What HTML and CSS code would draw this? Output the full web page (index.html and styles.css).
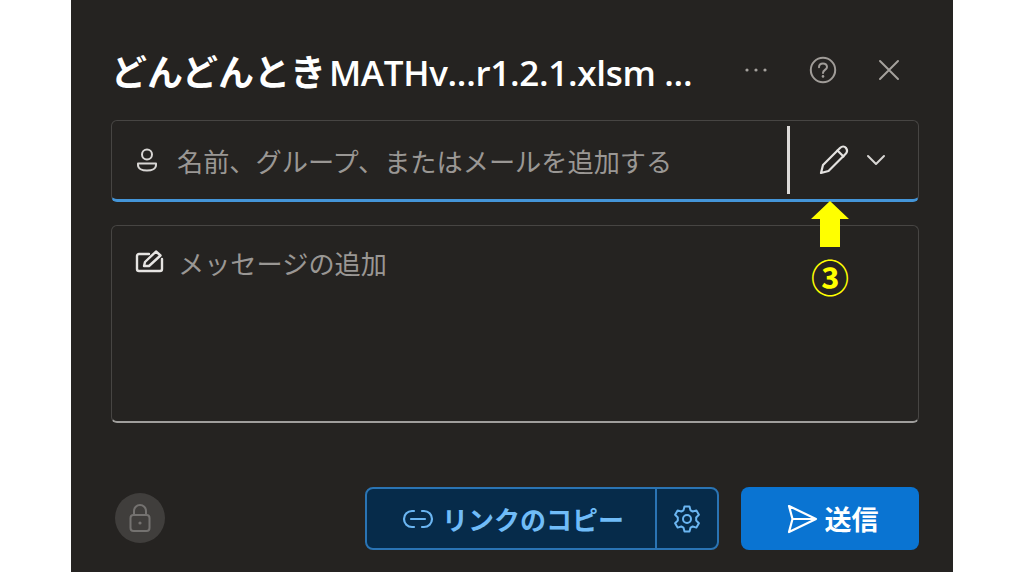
FILE: index.html
```html
<!DOCTYPE html>
<html lang="ja">
<head>
    <meta charset="UTF-8">
    <link rel="stylesheet" href="styles.css">
</head>
<body>
    <div class="panel">
        <header class="top">
            <h1 class="title"><span class="title-jp">どんどんとき</span>MATHv...r1.2.1.xlsm ...</h1>
            <div class="top-icons">
                <svg class="ico-more" width="24" height="6" viewBox="0 0 24 6"><circle cx="3" cy="3" r="1.6"/><circle cx="12" cy="3" r="1.6"/><circle cx="21" cy="3" r="1.6"/></svg>
                <svg class="ico-help" width="28" height="28" viewBox="0 0 28 28"><circle cx="14" cy="14" r="12.2"/><path d="M10 11.2c0-2.4 1.8-3.8 4-3.8s4 1.4 4 3.5c0 3-4 3-4 6"/><circle class="dot" cx="14" cy="20.4" r="1.3"/></svg>
                <svg class="ico-close" width="22" height="22" viewBox="0 0 22 22"><path d="M2 2l18 18M20 2L2 20"/></svg>
            </div>
        </header>

        <div class="field">
            <svg class="ico-person" width="22" height="24" viewBox="0 0 22 24"><circle cx="11" cy="6.5" r="5"/><path d="M2 15.5h18v1.5c0 3.500-4 5.500-9 5.500s-9-2-9-5.500z"/></svg>
            <span class="placeholder">名前、グループ、またはメールを追加する</span>
            <div class="divider"></div>
            <div class="perm">
                <svg class="ico-pencil" width="32" height="32" viewBox="0 0 32 32"><path d="M3 29l2-8L22 4c2-2 4.500-2 6 0s1.500 4-.5 6L10.500 27z"/><path d="M19.500 6.500l6 6"/></svg>
                <svg class="ico-chevron" width="20" height="12" viewBox="0 0 20 12"><path d="M2 2l8 8 8-8"/></svg>
            </div>
        </div>

        <div class="message">
            <svg class="ico-note" width="30" height="24" viewBox="0 0 30 24"><path d="M14 5H4a2 2 0 0 0-2 2v13a2 2 0 0 0 2 2h21a2 2 0 0 0 2-2V10"/><path d="M9 17l1-4L21 2.500l4.500 4L14 17z"/></svg>
            <span class="placeholder">メッセージの追加</span>
        </div>

        <footer class="bottom">
            <div class="lock">
                <svg width="22" height="30" viewBox="0 0 22 30"><path d="M5 12V8a6 6 0 0 1 12 0v4"/><rect x="1.500" y="12" width="19" height="16" rx="3"/><circle class="dot" cx="11" cy="20" r="1.600"/></svg>
            </div>
            <div class="copy-group">
                <button class="copy-btn">
                    <svg width="32" height="20" viewBox="0 0 32 20"><path d="M12 2H10a8 8 0 0 0 0 16h2M20 2h2a8 8 0 0 1 0 16h-2M9 10h14"/></svg>
                    リンクのコピー
                </button>
                <button class="gear-btn">
                    <svg width="30" height="30" viewBox="0 0 30 30"><path d="M12.500 2.500h5l1 3.800 2.200 1.200 3.700-1.100 2.500 4.400-2.700 2.700v3l2.700 2.700-2.500 4.400-3.700-1.100-2.200 1.200-1 3.800h-5l-1-3.800-2.200-1.200-3.700 1.100-2.500-4.400 2.700-2.700v-3L3.100 10.800l2.500-4.400 3.700 1.100 2.200-1.200z"/><circle cx="15" cy="15" r="4"/></svg>
                </button>
            </div>
            <button class="send-btn">
                <svg width="34" height="30" viewBox="0 0 32 30"><path d="M3 2l27 13L3 28l3.500-13zM6.500 15H30"/></svg>
                送信
            </button>
        </footer>

        <!-- annotation on top of the screenshot -->
        <div class="callout">
            <svg width="38" height="46" viewBox="0 0 38 46"><path d="M19 0l19 18H29v28H9V18H0z"/></svg>
            <span class="callout-num">③</span>
        </div>
    </div>
</body>
</html>
```

FILE: styles.css
```css
body {
    margin: 0;
    background-color: #fff;
    font-family: "Noto Sans CJK JP", "Noto Sans", sans-serif;
}

.panel {
    position: relative;
    box-sizing: border-box;
    width: 882px;
    height: 572px;
    margin-left: 71px;
    padding: 0 34px 22px 40px;
    background-color: #252321;
    display: flex;
    flex-direction: column;
}

svg {
    fill: none;
    stroke-linecap: round;
    stroke-linejoin: round;
}

.top {
    box-sizing: border-box;
    height: 120px;
    padding-top: 19px;
    display: flex;
    align-items: center;
    justify-content: space-between;
}

.title {
    margin: 0;
    color: #fff;
    font-size: 35px;
    font-weight: 600;
    font-family: "Open Sans", "Noto Sans CJK JP", sans-serif;
    white-space: nowrap;
    letter-spacing: -0.3px;
}

.title-jp {
    font-family: "Noto Sans CJK JP", sans-serif;
    font-size: 36px;
    font-weight: 700;
    letter-spacing: 0;
    margin-right: 3px;
}

.top-icons {
    display: flex;
    align-items: center;
    gap: 41px;
    padding-right: 19px;
}

.ico-more { fill: #a5a19d; }
.ico-help { stroke: #a09c98; stroke-width: 2; }
.ico-help .dot { fill: #a09c98; stroke: none; }
.ico-close { stroke: #a5a19d; stroke-width: 2; }

.field {
    box-sizing: border-box;
    height: 82px;
    flex-shrink: 0;
    display: flex;
    align-items: center;
    padding: 0 32px 0 24px;
    border: 1px solid #474543;
    border-bottom: 3px solid #4495d8;
    border-radius: 6px;
}

.placeholder {
    color: #9a9794;
    font-size: 26.2px;
    line-height: 1;
    white-space: nowrap;
}

.field .placeholder { margin-top: 2px; }

.ico-person { stroke: #d8d6d4; stroke-width: 2; margin-right: 19px; flex-shrink: 0; }

.divider {
    width: 3px;
    height: 68px;
    margin-left: auto;
    background-color: #dcdad8;
}

.perm {
    display: flex;
    align-items: center;
    gap: 16px;
    margin-left: 28px;
}

.ico-pencil { stroke: #e4e2e0; stroke-width: 2.2; }
.ico-chevron { stroke: #d8d6d4; stroke-width: 2; }

.message {
    box-sizing: border-box;
    height: 198px;
    flex-shrink: 0;
    margin-top: 23px;
    padding: 23px 25px;
    display: flex;
    align-items: flex-start;
    gap: 13px;
    border: 1px solid #474543;
    border-bottom: 2px solid #a09e9c;
    border-radius: 6px;
}

.ico-note { stroke: #e6e4e2; stroke-width: 2.4; margin-left: -2px; flex-shrink: 0; }
.message .placeholder { margin-top: 1px; }

.bottom {
    margin-top: auto;
    display: flex;
    align-items: center;
}

.lock {
    width: 50px;
    height: 50px;
    margin: 0 auto 2px 4px;
    border-radius: 50%;
    background-color: #403e3c;
    display: flex;
    align-items: center;
    justify-content: center;
}

.lock svg { stroke: #747270; stroke-width: 2; }
.lock .dot { fill: #747270; stroke: none; }

button {
    font-family: inherit;
    font-size: 26px;
    font-weight: 700;
    display: flex;
    align-items: center;
    justify-content: center;
    padding: 0;
}

.copy-group {
    box-sizing: border-box;
    width: 354px;
    height: 63px;
    display: flex;
    background-color: #062b4a;
    border: 2px solid #2a74b4;
    border-radius: 8px;
}

.copy-btn {
    width: 290px;
    gap: 8px;
    padding-left: 4px;
    color: #70bcf8;
    background: none;
    border: 0;
    border-right: 2px solid #2a74b4;
}

.copy-btn svg { stroke: #6bb6f2; stroke-width: 2.2; }

.gear-btn {
    flex: 1;
    background: none;
    border: 0;
}

.gear-btn svg { stroke: #6bb6f2; stroke-width: 2; }

.send-btn {
    box-sizing: border-box;
    width: 178px;
    height: 63px;
    margin-left: 22px;
    gap: 6px;
    padding-left: 3px;
    font-size: 27px;
    color: #fff;
    background-color: #0a74d2;
    border: 0;
    border-radius: 8px;
}

.send-btn svg { stroke: #fff; stroke-width: 2.2; }

.callout {
    position: absolute;
    left: 740px;
    top: 201px;
    width: 38px;
    display: flex;
    flex-direction: column;
    align-items: center;
}

.callout svg { fill: #ffff00; flex-shrink: 0; }

.callout-num {
    color: #ffff00;
    font-size: 38px;
    font-weight: 700;
    line-height: 1;
    margin-top: 10px;
}
```
